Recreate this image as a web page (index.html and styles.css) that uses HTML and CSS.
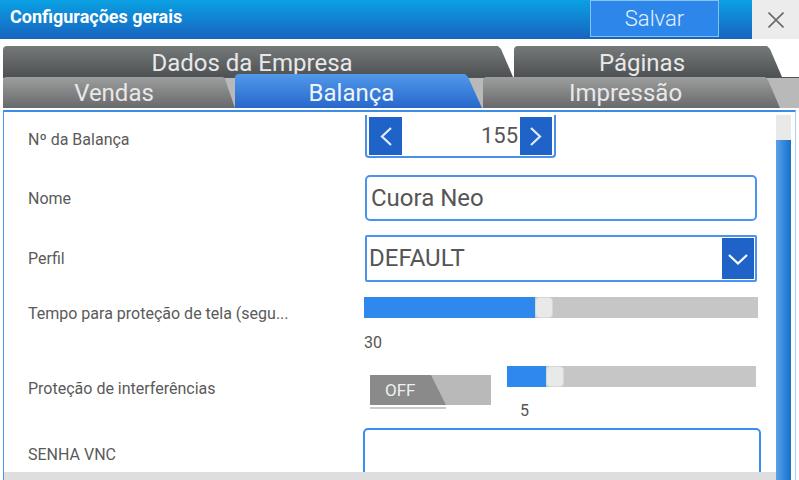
FILE: index.html
```html
<!DOCTYPE html>
<html lang="pt-BR">
<head>
<meta charset="utf-8">
<title>Configurações gerais</title>
<link rel="stylesheet" href="styles.css">
</head>
<body>
<div class="app">
  <header class="topbar">
    <h1 class="title">Configurações gerais</h1>
    <button class="save">Salvar</button>
    <button class="close" aria-label="Fechar">
      <svg width="16" height="16" viewBox="0 0 16 16"><path d="M0.5 0.5 L15.5 15.5 M15.5 0.5 L0.5 15.5" stroke="#6a6a6a" stroke-width="1.6" fill="none"/></svg>
    </button>
  </header>

  <nav class="tabs">
    <div class="tab-row row-back">
      <div class="tab tab-dark tab-dados">Dados da Empresa</div>
      <div class="tab tab-dark tab-paginas">Páginas</div>
    </div>
    <div class="tab-row row-front">
      <div class="tab tab-grey tab-vendas">Vendas</div>
      <div class="tab tab-active tab-balanca">Balança</div>
      <div class="tab tab-grey tab-impressao">Impressão</div>
    </div>
  </nav>

  <section class="panel">
    <div class="panel-main">
      <div class="form">
        <div class="field field-a">
          <div class="label">Nº da Balança</div>
          <div class="spinner">
            <span class="spin-btn spin-left">
              <svg width="33" height="38" viewBox="0 0 33 38"><polyline points="22,11 13,19.5 22,28" fill="none" stroke="#e2ecf8" stroke-width="2.2"/></svg>
            </span>
            <span class="spin-value">155</span>
            <span class="spin-btn spin-right">
              <svg width="32" height="38" viewBox="0 0 32 38"><polyline points="11,11 20,19.5 11,28" fill="none" stroke="#e2ecf8" stroke-width="2.2"/></svg>
            </span>
          </div>
        </div>

        <div class="field field-b">
          <div class="label">Nome</div>
          <div class="textbox">Cuora Neo</div>
        </div>

        <div class="field field-c">
          <div class="label">Perfil</div>
          <div class="select">
            <span class="select-value">DEFAULT</span>
            <span class="select-btn">
              <svg width="32" height="41" viewBox="0 0 32 41"><polyline points="7,17 16,25.5 25,17" fill="none" stroke="#ffffff" stroke-width="2.2"/></svg>
            </span>
          </div>
        </div>

        <div class="field field-d">
          <div class="label">Tempo para proteção de tela (segu...</div>
          <div class="slider-block slider-wide">
            <div class="slider">
              <span class="slider-fill" style="width:171px"></span>
              <span class="slider-thumb"></span>
            </div>
            <div class="slider-value value-30">30</div>
          </div>
        </div>

        <div class="field field-e">
          <div class="label">Proteção de interferências</div>
          <div class="toggle-block">
            <div class="toggle">
              <span class="toggle-off">OFF</span>
            </div>
            <div class="toggle-line"></div>
          </div>
          <div class="slider-block slider-small">
            <div class="slider">
              <span class="slider-fill" style="width:39px"></span>
              <span class="slider-thumb"></span>
            </div>
            <div class="slider-value value-5">5</div>
          </div>
        </div>

        <div class="field field-f">
          <div class="label">SENHA VNC</div>
          <div class="textbox textbox-pass"></div>
        </div>
      </div>
      <div class="hbar"></div>
    </div>
    <div class="vscroll"><div class="vthumb"></div></div>
  </section>
</div>
</body>
</html>
```

FILE: styles.css
```css
* { box-sizing: border-box; }

html, body {
  margin: 0;
  padding: 0;
  background: #ffffff;
}

body {
  width: 799px;
  height: 480px;
  overflow: hidden;
  font-family: Roboto, "Noto Sans", "Liberation Sans", sans-serif;
  color: #5a5a5a;
}

.app {
  width: 799px;
  height: 480px;
  display: flex;
  flex-direction: column;
}

/* ---------- top bar ---------- */
.topbar {
  height: 39px;
  flex: none;
  display: flex;
  align-items: flex-start;
  background: linear-gradient(#0aa1e3, #1863c0);
}

.title {
  flex: 1;
  margin: 6px 0 0 10px;
  font-size: 18px;
  font-weight: 700;
  color: #ffffff;
  line-height: normal;
}

.save {
  width: 129px;
  height: 37px;
  margin: 0 33px 0 0;
  padding: 0;
  border: 1px solid #84c4f4;
  background: #2d86e9;
  color: #e4f1ff;
  font-family: Roboto, sans-serif;
  font-weight: 300;
  font-size: 22px;
  line-height: 34px;
}

.close {
  width: 47px;
  height: 39px;
  margin: 0;
  padding: 0;
  border: 0;
  background: #ececec;
  display: flex;
  align-items: center;
  justify-content: center;
}

/* ---------- tabs ---------- */
.tabs {
  flex: none;
  margin-top: 7px;
}

.tab-row {
  display: flex;
  align-items: flex-start;
  height: 31px;
  margin-left: 3px;
}

.row-front {
  background: #b9b9b9;
  box-shadow: inset 0 1px 0 #4e565e;
}

.tab {
  height: 31px;
  font-size: 24px;
  line-height: 27px;
  text-align: center;
  white-space: nowrap;
  overflow: hidden;
  border-top-left-radius: 4px;
  color: #e8e8e8;
}

.tab-dark {
  background: linear-gradient(#76797a, #4d5153);
  padding-top: 4px;
  padding-right: 12px;
  clip-path: polygon(0 0, calc(100% - 15px) 0, calc(100% - 12px) 3px, 100% 100%, 0 100%);
}

.tab-grey {
  background: linear-gradient(#9d9e9e, #67696a);
  padding-top: 3px;
}

.tab-active {
  background: linear-gradient(#5199ea, #2767cb);
  color: #edf4fc;
  height: 34px;
  margin-top: -3px;
  padding-top: 6px;
  padding-right: 14px;
  clip-path: polygon(0 0, calc(100% - 17px) 0, calc(100% - 14px) 3px, 100% 100%, 0 100%);
}

.tab-dados { width: 510px; }
.tab-paginas { width: 268px; margin-left: 1px; }

.tab-vendas {
  width: 232px;
  padding-right: 10px;
  clip-path: polygon(0 0, calc(100% - 12px) 0, calc(100% - 10px) 2px, 100% 100%, 0 100%);
}
.tab-balanca { width: 247px; }
.tab-impressao {
  width: 297px;
  margin-left: 1px;
  padding-right: 12px;
  clip-path: polygon(0 0, calc(100% - 15px) 0, calc(100% - 12px) 3px, 100% 100%, 0 100%);
}

/* ---------- panel ---------- */
.panel {
  flex: none;
  margin: 2px 0 0 3px;
  width: 793px;
  height: 370px;
  border-top: 2px solid #3c8de6;
  border-left: 1px solid #4b94e6;
  border-right: 1px solid #a9cff5;
  display: flex;
  overflow: hidden;
}

.panel-main {
  width: 772px;
  display: flex;
  flex-direction: column;
}

.form {
  flex: 1;
  overflow: hidden;
}

.hbar {
  height: 8px;
  flex: none;
  background: #dedede;
}

.vscroll {
  width: 15px;
  margin: 3px 4px 0 0;
  background: #e9e9e9;
  display: flex;
  flex-direction: column;
}

.vthumb {
  flex: 1;
  margin-top: 25px;
  background: linear-gradient(to right, #5ea0e8, #2f86dc 55%, #1a72c6);
}

/* ---------- fields ---------- */
.field {
  display: flex;
  align-items: flex-start;
}

.label {
  width: 361px;
  flex: none;
  padding-left: 24px;
  font-size: 16px;
  line-height: 19px;
  color: #5a5a5a;
  white-space: nowrap;
}

.field-a { height: 60px; }
.field-b { height: 60px; }
.field-c { height: 60px; }
.field-d { height: 68px; }
.field-e { height: 63px; }
.field-f { height: 70px; }

.field-a .label { margin-top: 18px; }
.field-b .label { margin-top: 17px; }
.field-c .label { margin-top: 17px; }
.field-d .label { margin-top: 12px; }
.field-e .label { margin-top: 19px; }
.field-f .label { margin-top: 22px; }

/* spinner */
.spinner {
  margin-top: 3px;
  width: 191px;
  height: 43px;
  border: 2px solid #4a90e8;
  border-top: 0;
  border-radius: 0 0 4px 4px;
  display: flex;
  align-items: flex-start;
}

.spin-btn {
  display: block;
  height: 38px;
  margin-top: 2px;
  background: #1f63c9;
}

.spin-btn svg { display: block; }

.spin-left { width: 33px; margin-left: 2px; }
.spin-right { width: 32px; margin-left: 2px; margin-right: 2px; }

.spin-value {
  flex: 1;
  margin-top: 2px;
  text-align: right;
  font-size: 22px;
  line-height: 38px;
  color: #555555;
}

/* text boxes */
.textbox {
  margin-top: 3px;
  width: 392px;
  height: 46px;
  border: 2px solid #4a93ee;
  border-radius: 5px;
  padding-left: 4px;
  font-size: 24px;
  line-height: 42px;
  color: #555555;
}

.textbox-pass {
  margin-top: 5px;
  margin-left: -2px;
  width: 398px;
  height: 60px;
  border-color: #3a8ef0;
}

/* select */
.select {
  margin-top: 3px;
  width: 392px;
  height: 47px;
  border: 2px solid #4a93ee;
  border-radius: 2px;
  display: flex;
  align-items: flex-start;
}

.select-value {
  flex: 1;
  padding-left: 2px;
  font-size: 24px;
  line-height: 43px;
  color: #555555;
}

.select-btn {
  width: 32px;
  height: 41px;
  margin: 1px 1px 0 0;
  background: #1f63c9;
}

.select-btn svg { display: block; }

/* sliders */
.slider {
  height: 21px;
  background: #c5c6c5;
  display: flex;
}

.slider-fill {
  display: block;
  height: 100%;
  background: #2e88ee;
}

.slider-thumb {
  display: block;
  width: 18px;
  height: 100%;
  background: #e8eaea;
  border: 1px solid #d6d8d8;
  border-radius: 4px;
}

.slider-value {
  font-size: 16px;
  line-height: 19px;
  color: #555555;
}

.slider-wide {
  margin-top: 5px;
  margin-left: -1px;
  width: 394px;
}

.value-30 { margin-top: 15px; }

.slider-small {
  margin-top: 6px;
  margin-left: 16px;
  width: 249px;
}

.value-5 { margin-top: 14px; margin-left: 13px; }

/* toggle */
.toggle-block {
  margin-top: 15px;
  margin-left: 5px;
  width: 121px;
}

.toggle {
  height: 30px;
  background: #b9b9b9;
}

.toggle-off {
  display: block;
  width: 76px;
  height: 30px;
  padding-left: 15px;
  background: #8a8a8a;
  clip-path: polygon(0 0, 61px 0, 76px 100%, 0 100%);
  color: #f0f0f0;
  font-size: 17px;
  line-height: 30px;
}

.toggle-line {
  width: 76px;
  height: 2px;
  margin-top: 2px;
  background: #cacaca;
}
```
